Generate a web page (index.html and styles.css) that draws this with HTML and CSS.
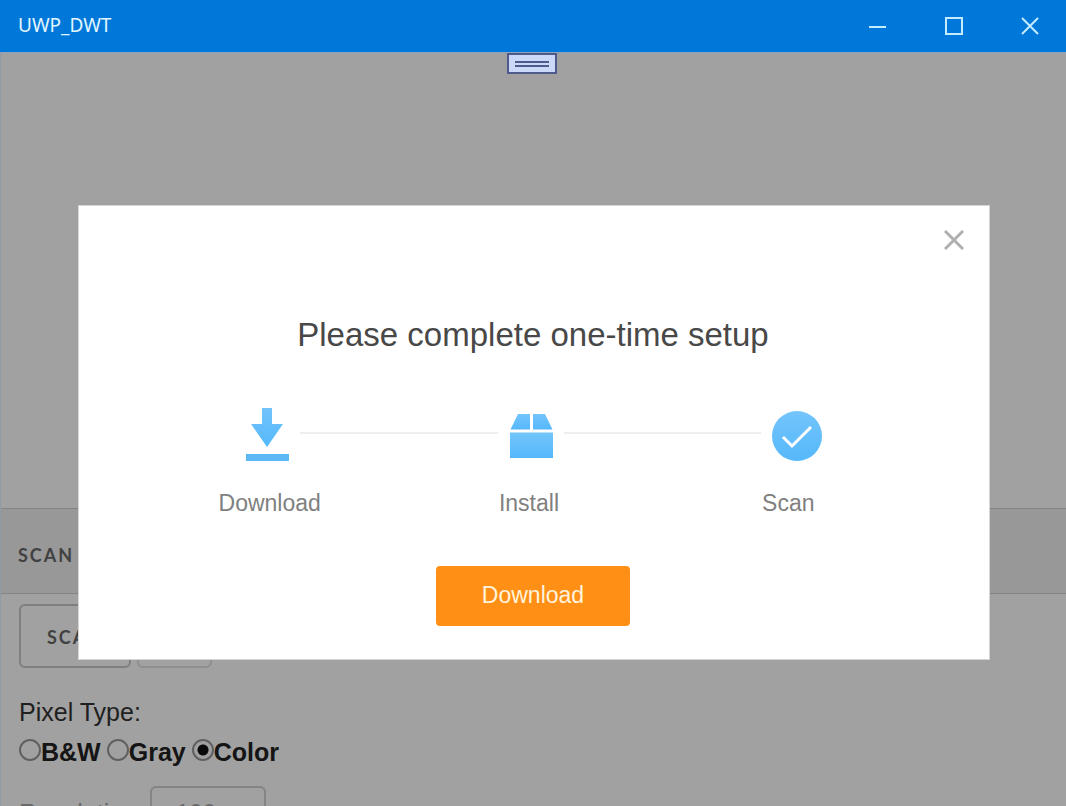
FILE: index.html
```html
<!DOCTYPE html>
<html lang="en">
<head>
<meta charset="utf-8">
<title>UWP_DWT</title>
<link rel="stylesheet" href="styles.css">
</head>
<body>
<header class="titlebar">
  <h1 class="titlebar-name">UWP_DWT</h1>
  <div class="window-controls">
    <button class="window-button" type="button" aria-label="Minimize">
      <svg width="18" height="18" viewBox="0 0 18 18"><path d="M0 10H17"/></svg>
    </button>
    <button class="window-button" type="button" aria-label="Maximize">
      <svg width="18" height="18" viewBox="0 0 18 18"><path d="M1 1H17V17H1Z"/></svg>
    </button>
    <button class="window-button" type="button" aria-label="Close">
      <svg width="18" height="18" viewBox="0 0 18 18"><path d="M1 1L17 17M17 1L1 17"/></svg>
    </button>
  </div>
</header>
<main class="client">
  <div class="viewer"></div>
  <h2 class="section-bar">SCAN</h2>
  <form class="scan-form">
    <div class="actions">
      <button class="outline-button" type="button">SCAN</button>
      <button class="outline-button outline-button-light" type="button" aria-label="More"></button>
    </div>
    <fieldset class="pixel-type">
      <legend class="legend">Pixel Type:</legend>
      <div class="radios">
        <label class="radio-label"><input class="radio" type="radio" name="pixel">B&amp;W</label>
        <label class="radio-label"><input class="radio" type="radio" name="pixel">Gray</label>
        <label class="radio-label"><input class="radio" type="radio" name="pixel" checked>Color</label>
      </div>
    </fieldset>
    <div class="resolution">
      <label class="resolution-label" for="resolution">Resolution:</label>
      <select class="resolution-select" id="resolution"><option>100</option><option>200</option></select>
    </div>
  </form>
  <div class="overlay">
    <section class="dialog" role="dialog" aria-labelledby="dialog-title">
      <button class="dialog-close" type="button" aria-label="Close dialog">
        <svg width="20" height="20" viewBox="0 0 20 20"><path d="M1 1L19 19M19 1L1 19"/></svg>
      </button>
      <h2 class="dialog-title" id="dialog-title">Please complete one-time setup</h2>
      <div class="step-icons">
        <svg width="44" height="56" viewBox="0 0 44 56">
          <defs>
            <linearGradient id="sky" x1="0" y1="0" x2="0" y2="1">
              <stop offset="0" stop-color="#73c4fb"/><stop offset="1" stop-color="#55b8fb"/>
            </linearGradient>
          </defs>
          <path fill="url(#sky)" d="M17 1H27V17H38L22 40L6 17H17Z"/>
          <path fill="#5cb8f5" d="M1 47H44V54H1Z"/>
        </svg>
        <span class="connector"></span>
        <svg width="44" height="56" viewBox="0 0 44 56">
          <path fill="url(#sky)" d="M9 7H21V22.500H1.500ZM24 7H36L43.500 22.500H24Z"/>
          <path fill="url(#sky)" d="M1 25.500H44V51H1Z"/>
        </svg>
        <span class="connector"></span>
        <svg width="50" height="56" viewBox="0 0 50 56">
          <circle cx="25" cy="29" r="25" fill="url(#sky)"/>
          <path fill="none" stroke="#fff" stroke-width="3" d="M11 30L20 39L39 20"/>
        </svg>
      </div>
      <div class="step-labels">
        <span>Download</span>
        <span>Install</span>
        <span>Scan</span>
      </div>
      <button class="download-button" type="button">Download</button>
    </section>
  </div>
  <button class="debug-handle" type="button" aria-label="Debug toolbar">
    <svg width="34" height="6" viewBox="0 0 34 6"><path d="M0 1H34M0 5H34"/></svg>
  </button>
</main>
</body>
</html>
```
FILE: styles.css
```css
* {
  box-sizing: border-box;
}

body {
  margin: 0;
  height: 100vh;
  display: flex;
  flex-direction: column;
  font-family: "Liberation Sans", Arial, sans-serif;
  color: #333;
}

button {
  padding: 0;
  font-family: inherit;
}

svg {
  display: block;
  flex: none;
}

.titlebar {
  flex: none;
  height: 52px;
  display: flex;
  align-items: center;
  justify-content: space-between;
  padding-left: 18px;
  background: #0078d9;
  color: #e2f6ff;
}

.titlebar-name {
  margin: 0;
  padding-bottom: 2px;
  font: 400 19px "Noto Sans", "Open Sans", sans-serif;
}

.window-controls {
  display: flex;
  align-self: stretch;
}

.window-button {
  width: 76px;
  display: flex;
  align-items: center;
  justify-content: center;
  border: 0;
  background: none;
  stroke: #c4ecff;
  stroke-width: 2;
  fill: none;
}

.window-button:last-child {
  margin-right: -2px;
}

.client {
  position: relative;
  flex: 1;
  min-height: 0;
  overflow: hidden;
  border-top: 1px solid #8ba3bc;
  background: #fff;
}

.viewer {
  height: 455px;
}

.section-bar {
  margin: 0;
  padding: 37px 18px 29px;
  border: solid #d2d2d2;
  border-width: 1px 0;
  background: #f1f1f1;
  color: #686868;
  font: 700 18px/18px Lato, sans-serif;
  letter-spacing: 2px;
}

.scan-form {
  padding: 10px 19px;
}

.actions {
  display: flex;
  gap: 6px;
}

.outline-button {
  width: 112px;
  height: 64px;
  padding-top: 2px;
  border: 2px solid #cacaca;
  border-radius: 6px;
  background: none;
  color: #686868;
  font: 700 18px Lato, sans-serif;
  letter-spacing: 2px;
}

.outline-button-light {
  width: 75px;
  border-color: #e2e2e2;
}

.pixel-type {
  margin: 0;
  padding: 0;
  border: 0;
}

.legend {
  padding: 29px 0 0;
  font-size: 25px;
  line-height: 30px;
}

.radios {
  display: flex;
  gap: 6px;
  padding: 10px 0 19px;
  color: #222;
  font-size: 25px;
  line-height: 30px;
  font-weight: 700;
}

.radio-label {
  display: flex;
  align-items: center;
}

.radio {
  appearance: none;
  width: 22px;
  height: 22px;
  margin: 0 0 4px;
  border: 2px solid #999;
  border-radius: 50%;
}

.radio:checked {
  background: radial-gradient(circle, #111 5px, transparent 6px);
}

.resolution {
  display: flex;
  gap: 7px;
  line-height: 28px;
}

.resolution-label {
  width: 124px;
  padding-top: 13px;
  font-size: 25px;
  color: #aaa;
}

.resolution-select {
  appearance: none;
  width: 116px;
  height: 56px;
  padding: 0 24px 4px;
  border: 2px solid #d2d2d2;
  border-radius: 6px;
  background: none;
  color: #aaa;
  font: 24px "Liberation Sans", Arial, sans-serif;
}

.overlay {
  position: absolute;
  inset: 0;
  display: flex;
  align-items: center;
  padding: 5px 76px 0 78px;
  border-left: 1px solid #8d9ba8;
  padding-left: 77px;
  background: rgb(0 0 0 / 37%);
}

.dialog {
  flex: 1;
  display: flex;
  flex-direction: column;
  padding-bottom: 33px;
  border: 1px solid #d6d6d6;
  background: #fff;
}

.dialog-close {
  align-self: flex-end;
  margin: 24px 25px 0 0;
  border: 0;
  background: none;
  stroke: #b0b0b0;
  stroke-width: 3;
}

.dialog-title {
  margin: 65px 2px 0 0;
  color: #484848;
  font-size: 33px;
  font-weight: 400;
  line-height: 40px;
  text-align: center;
}

.step-icons {
  display: flex;
  align-items: center;
  gap: 11px;
  margin: 52px 167px 0 166px;
}

.connector {
  flex: 1;
  height: 2px;
  margin-bottom: 3px;
  background: #eee;
}

.step-labels {
  display: grid;
  grid-template-columns: repeat(3, 1fr);
  margin: 24px 71px 0 61px;
  color: #808080;
  font-size: 23px;
  line-height: 32px;
  text-align: center;
}

.download-button {
  align-self: center;
  width: 194px;
  height: 60px;
  margin: 47px 2px 0 0;
  border: 0;
  border-radius: 4px;
  background: #ff9015;
  color: #fff3dc;
  font-size: 23px;
}

.debug-handle {
  position: absolute;
  top: 0;
  left: calc(50% - 26px);
  width: 50px;
  height: 21px;
  display: flex;
  align-items: center;
  justify-content: center;
  border: 2px solid #4d5a8a;
  background: #ccd8f8;
  stroke: #4d5a8a;
  stroke-width: 2;
}
```
